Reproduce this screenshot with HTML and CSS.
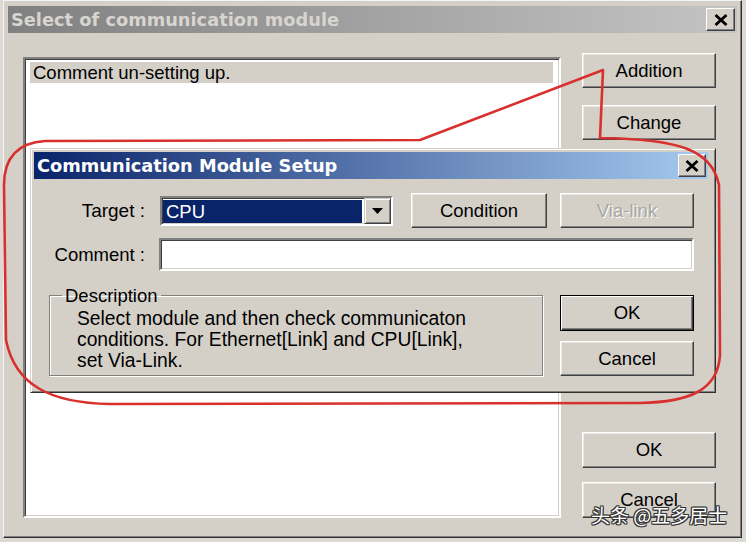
FILE: index.html
```html
<!DOCTYPE html>
<html>
<head>
<meta charset="utf-8">
<link rel="stylesheet" href="styles.css">
</head>
<body>
<div class="window">
  <div class="titlebar">
    <span class="title">Select of communication module</span>
    <span class="xbtn"><svg width="14" height="12" viewBox="0 0 14 12"><path d="M1.5 1 L12.5 11 M12.5 1 L1.5 11" stroke="#000" stroke-width="2.8"/></svg></span>
  </div>
  <div class="content">
    <div class="listbox">
      <div class="list-row">Comment un-setting up.</div>
    </div>
    <div class="side">
      <div class="btn">Addition</div>
      <div class="btn">Change</div>
      <div class="btn push">OK</div>
      <div class="btn">Cancel</div>
    </div>
  </div>
</div>

<div class="dialog">
  <div class="dtitle">
    <span class="title">Communication Module Setup</span>
    <span class="xbtn small"><svg width="14" height="12" viewBox="0 0 14 12"><path d="M1.5 1 L12.5 11 M12.5 1 L1.5 11" stroke="#000" stroke-width="2.8"/></svg></span>
  </div>
  <div class="dbody">
    <div class="row row1">
      <span class="label">Target :</span>
      <div class="combo">
        <div class="combo-sel">CPU</div>
        <div class="combo-btn"><svg width="11" height="6" viewBox="0 0 11 6"><path d="M0 0 H11 L5.5 6 Z" fill="#000"/></svg></div>
      </div>
      <div class="btn cond">Condition</div>
      <div class="btn via disabled">Via-link</div>
    </div>
    <div class="row row2">
      <span class="label">Comment :</span>
      <div class="input"></div>
    </div>
    <div class="row row3">
      <fieldset class="group">
        <legend>Description</legend>
        <p class="desc">Select module and then check communicaton<br>conditions. For Ethernet[Link] and CPU[Link],<br>set Via-Link.</p>
      </fieldset>
      <div class="dbtns">
        <div class="btn default">OK</div>
        <div class="btn">Cancel</div>
      </div>
    </div>
  </div>
</div>

<svg class="annot" width="746" height="542" viewBox="0 0 746 542">
  <path d="M420 140 L603 70 L600 138 C680 139 712 150 719 185 L720 355 C718 390 690 402 640 403 L110 404 C50 403 15 385 6 340 L4 185 C4 160 15 143 45 141 Z" fill="none" stroke="#d8302d" stroke-width="2.6" stroke-linejoin="round"/>
</svg>

<div class="watermark">头条 @五多居士</div>
</body>
</html>
```

FILE: styles.css
```css
html, body {
  margin: 0;
  padding: 0;
}
body {
  position: relative;
  width: 746px;
  height: 542px;
  overflow: hidden;
  background: #dcd9d4;
  font-family: "Liberation Sans", Arial, sans-serif;
  font-size: 18.5px;
  color: #000;
}

.window {
  margin-left: 3px;
  width: 739px;
  height: 538px;
  box-sizing: border-box;
  background: #d4d0c8;
  border: 1px solid;
  border-color: #f4f4f4 #303030 #303030 #f4f4f4;
  box-shadow: inset -1px -1px #808080;
  padding: 5px 4px 0 4px;
}

.titlebar {
  height: 27px;
  display: flex;
  align-items: center;
  justify-content: space-between;
  padding-left: 3px;
  background: linear-gradient(to right, #808080, #c4c4c4);
}
.title {
  font-family: "DejaVu Sans", Verdana, sans-serif;
  font-weight: bold;
  font-size: 17.8px;
  color: #d8d5d0;
  white-space: nowrap;
}
.xbtn {
  width: 29px;
  height: 23px;
  box-sizing: border-box;
  margin-right: 2px;
  display: flex;
  align-items: center;
  justify-content: center;
  background: #d4d0c8;
  border: 1px solid;
  border-color: #fff #404040 #404040 #fff;
  box-shadow: inset -1px -1px #808080;
}
.xbtn.small {
  width: 28px;
  height: 23px;
}

.content {
  display: flex;
  padding: 20px 0 0 15px;
}
.listbox {
  margin-top: 4px;
  width: 538px;
  height: 461px;
  box-sizing: border-box;
  background: #fff;
  border: 2px solid;
  border-color: #808080 #fff #fff #808080;
  box-shadow: inset 1px 1px #404040, inset -1px -1px #d4d0c8;
  padding: 3px 6px 0 5px;
}
.list-row {
  height: 21px;
  line-height: 21px;
  padding-left: 3px;
  background: #d4d0c8;
  white-space: nowrap;
}

.side {
  margin-left: 21px;
  width: 134px;
  height: 465px;
  display: flex;
  flex-direction: column;
}
.side .btn {
  height: 35px;
}
.side .btn + .btn {
  margin-top: 17px;
}
.side .btn.push {
  margin-top: auto;
  height: 36px;
}
.side .btn.push + .btn {
  margin-top: 14px;
  height: 36px;
}

.btn {
  box-sizing: border-box;
  display: flex;
  align-items: center;
  justify-content: center;
  background: #d4d0c8;
  border: 1px solid;
  border-color: #fff #404040 #404040 #fff;
  box-shadow: inset -1px -1px #808080, inset 1px 1px #ece9e4;
  white-space: nowrap;
}
.btn.default {
  border: 1px solid #000;
  box-shadow: inset 1px 1px #fff, inset -1px -1px #404040, inset -2px -2px #808080;
}
.btn.disabled {
  color: #a8a6a2;
  text-shadow: 1px 1px #fff;
}

.dialog {
  position: absolute;
  left: 30px;
  top: 148px;
  width: 686px;
  height: 245px;
  box-sizing: border-box;
  background: #d4d0c8;
  border: 1px solid;
  border-color: #d4d0c8 #303030 #303030 #d4d0c8;
  box-shadow: inset 1px 1px #fff, inset -1px -1px #808080;
  padding: 3px;
}
.dtitle {
  height: 27px;
  margin-right: 4px;
  display: flex;
  align-items: center;
  justify-content: space-between;
  padding-left: 3px;
  background: linear-gradient(to right, #0a246a, #a6caf0);
}
.dtitle .title {
  color: #fff;
}
.dtitle .xbtn {
  margin-right: 2px;
}

.dbody {
  padding: 14px 18px 0 0;
}
.row {
  display: flex;
  align-items: center;
}
.label {
  width: 111px;
  flex: none;
  text-align: right;
  white-space: nowrap;
}
.row1 {
  height: 35px;
}
.row1 .label {
  font-size: 19px;
}
.combo {
  margin-left: 15px;
  width: 233px;
  height: 30px;
  box-sizing: border-box;
  display: flex;
  background: #fff;
  border: 2px solid;
  border-color: #808080 #fff #fff #808080;
  box-shadow: inset 1px 1px #404040, inset -1px -1px #d4d0c8;
}
.combo-sel {
  flex: 1;
  margin: 2px 2px 1px 1px;
  background: #0a246a;
  color: #fff;
  line-height: 23px;
  padding-left: 3px;
}
.combo-btn {
  width: 27px;
  box-sizing: border-box;
  display: flex;
  align-items: center;
  justify-content: center;
  background: #d4d0c8;
  border: 1px solid;
  border-color: #d4d0c8 #404040 #404040 #d4d0c8;
  box-shadow: inset 1px 1px #fff, inset -1px -1px #808080;
}
.cond {
  margin-left: 18px;
  width: 136px;
  height: 35px;
}
.via {
  margin-left: 13px;
  width: 134px;
  height: 35px;
}
.row2 {
  margin-top: 10px;
  height: 33px;
}
.input {
  margin-left: 14px;
  flex: 1;
  height: 33px;
  box-sizing: border-box;
  background: #fff;
  border: 2px solid;
  border-color: #808080 #fff #fff #808080;
  box-shadow: inset 1px 1px #404040, inset -1px -1px #d4d0c8;
}
.row3 {
  margin-top: 14px;
  align-items: flex-start;
}
.group {
  margin: 0 0 0 15px;
  width: 494px;
  height: 91px;
  box-sizing: border-box;
  border: 1px solid #808080;
  box-shadow: 1px 1px #fff, inset 1px 1px #fff;
  padding: 0 10px 0 27px;
  min-width: 0;
}
.group legend {
  padding: 0 3px;
  margin-left: -15px;
  line-height: 21px;
}
.desc {
  margin: 2px 0 0 0;
  font-size: 19.3px;
  line-height: 21px;
  white-space: nowrap;
}
.dbtns {
  margin-left: 17px;
  margin-top: 10px;
  width: 134px;
  display: flex;
  flex-direction: column;
}
.dbtns .btn {
  height: 36px;
}
.dbtns .btn + .btn {
  margin-top: 10px;
  height: 35px;
}

.annot {
  position: absolute;
  left: 0;
  top: 0;
  pointer-events: none;
}

.watermark {
  position: absolute;
  left: 591px;
  top: 502px;
  font-family: "Noto Sans CJK SC", "Noto Sans", sans-serif;
  font-size: 19px;
  line-height: 26px;
  color: #fff;
  white-space: nowrap;
  text-shadow: 1px 0 #333, -1px 0 #333, 0 1px #333, 0 -1px #333, 1px 1px #333, -1px -1px #333, 1px -1px #333, -1px 1px #333;
}
```
